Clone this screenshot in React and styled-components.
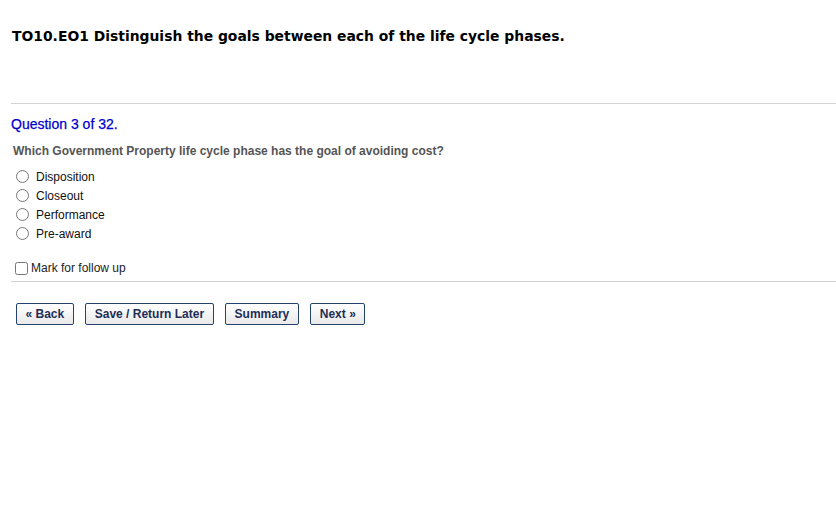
import React from "react";
import styled, { createGlobalStyle } from "styled-components";

const Global = createGlobalStyle`
  html, body { margin: 0; padding: 0; background: #fff; }
  body { font-family: "Liberation Sans", Arial, sans-serif; }
`;

const Page = styled.div`
  padding: 0 0 0 11px;
  display: flex;
  flex-direction: column;
`;

const Title = styled.h1`
  margin: 0;
  padding: 27px 0 0 1px;
  height: 75px;
  font-family: Verdana, "DejaVu Sans", sans-serif;
  font-size: 13.9px;
  font-weight: bold;
  color: #000;
  line-height: 18px;
  box-sizing: border-box;
`;

const Rule = styled.hr`
  margin: ${p => p.$mt || 0}px 0 0 0;
  border: 0;
  border-top: 1px solid #d3d3d3;
  height: 0;
`;

const QNum = styled.div`
  margin-top: 12px;
  color: #0000cc;
  font-size: 14px;
  line-height: 16px;
  -webkit-text-stroke: 0.25px #0000cc;
`;

const QText = styled.div`
  margin: 12px 0 0 2px;
  color: #555;
  font-size: 12px;
  font-weight: bold;
  line-height: 14px;
`;

const Options = styled.div`
  margin-top: 9px;
  display: flex;
  flex-direction: column;
`;

const OptionRow = styled.label`
  display: flex;
  align-items: center;
  height: 19px;
  font-size: 12px;
  color: #111;
  input {
    margin: 0 7px 0 5px;
    width: 13px;
    height: 13px;
  }
`;

const MarkRow = styled.label`
  margin-top: 17px;
  display: flex;
  align-items: center;
  height: 16px;
  font-size: 12px;
  color: #222;
  input {
    margin: 0 3px 0 4px;
    width: 13px;
    height: 13px;
  }
`;

const Buttons = styled.div`
  margin: 21px 0 0 5px;
  display: flex;
  gap: 11.5px;
`;

const Btn = styled.button`
  height: 22px;
  padding: 0 8.5px;
  border: 1px solid #23426d;
  border-radius: 2px;
  background: linear-gradient(#ffffff, #e9e9e9);
  color: #1d2d57;
  font-family: "Liberation Sans", Arial, sans-serif;
  font-size: 12px;
  font-weight: bold;
  cursor: pointer;
`;

const options = ["Disposition", "Closeout", "Performance", "Pre-award"];

export default function App() {
  return (
    <>
      <Global />
      <Page>
        <Title>TO10.EO1 Distinguish the goals between each of the life cycle phases.</Title>
        <Rule $mt={28} />
        <QNum>Question 3 of 32.</QNum>
        <QText>Which Government Property life cycle phase has the goal of avoiding cost?</QText>
        <Options>
          {options.map(o => (
            <OptionRow key={o}>
              <input type="radio" name="q" />
              {o}
            </OptionRow>
          ))}
        </Options>
        <MarkRow>
          <input type="checkbox" />
          Mark for follow up
        </MarkRow>
        <Rule $mt={5} />
        <Buttons>
          <Btn>« Back</Btn>
          <Btn>Save / Return Later</Btn>
          <Btn>Summary</Btn>
          <Btn>Next »</Btn>
        </Buttons>
      </Page>
    </>
  );
}
